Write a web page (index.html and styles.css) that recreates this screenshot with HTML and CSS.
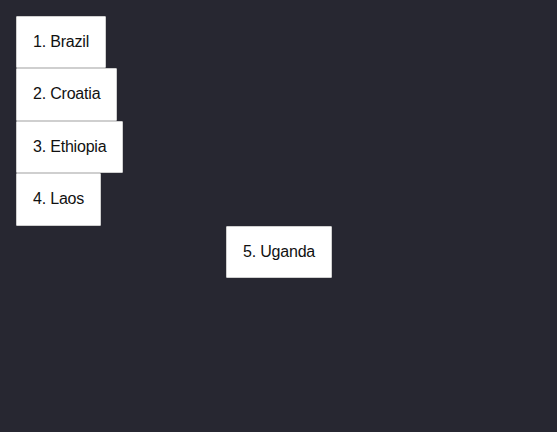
FILE: index.html
```html
<!DOCTYPE html>
<html>
<head>
<meta charset="utf-8">
<link rel="stylesheet" href="styles.css">
</head>
<body>
<div class="list">
  <div class="item">1. Brazil</div>
  <div class="item">2. Croatia</div>
  <div class="item">3. Ethiopia</div>
  <div class="item">4. Laos</div>
  <div class="item item-offset">5. Uganda</div>
</div>
</body>
</html>
```

FILE: styles.css
```css
html, body {
  margin: 0;
  background: #272731;
  height: 100%;
}
body {
  padding: 16px;
  box-sizing: border-box;
  font-family: "Liberation Sans", Arial, sans-serif;
  font-size: 16px;
}
.list {
  display: flex;
  flex-direction: column;
  align-items: flex-start;
}
.item {
  background: #fff;
  border: 1px solid #cfcfcf;
  border-radius: 1px;
  padding: 16px;
  line-height: 18.4px;
  letter-spacing: -0.2px;
  color: #111;
}
.item-offset {
  margin-left: 210px;
}
```
